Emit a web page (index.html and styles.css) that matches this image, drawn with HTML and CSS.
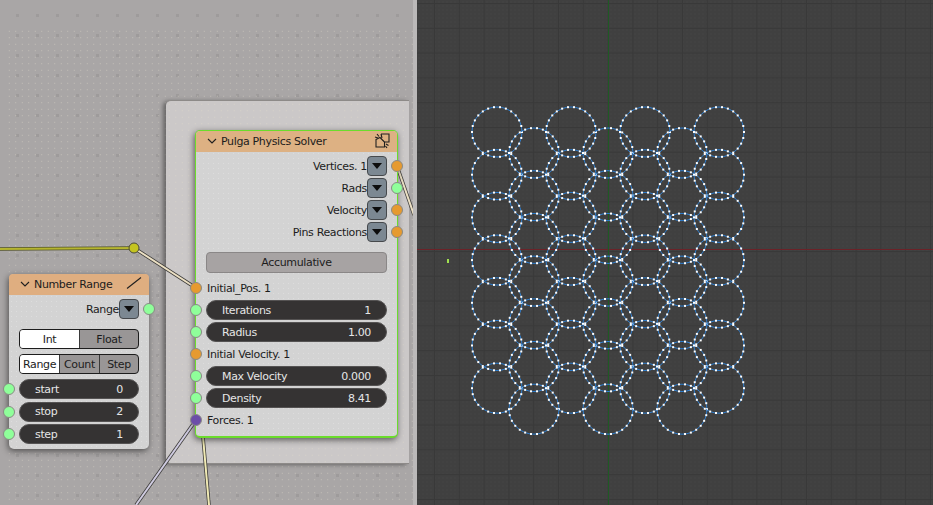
FILE: index.html
```html
<!DOCTYPE html>
<html lang="en">
<head>
    <meta charset="UTF-8">
    <title>Pulga Physics Solver</title>
    <link rel="stylesheet" href="styles.css">
</head>
<body>
    <div class="screen">
        <div class="node-editor">
            <div class="frame"></div>

            <!-- wires sit above the frame but under the nodes -->
            <svg class="wires" width="415" height="505" viewBox="0 0 415 505">
                <path class="wire-edge-olive" d="M0 249 L134 248"/>
                <path class="wire-olive" d="M0 249 L134 248"/>
                <path class="wire-edge" d="M134 248 L196 288"/>
                <path class="wire-pale" d="M134 248 L196 288"/>
                <path class="wire-edge" d="M397 166 L414 215"/>
                <path class="wire-pale" d="M397 166 L414 215"/>
                <path class="wire-edge" d="M196 420 L136 505"/>
                <path class="wire-lilac" d="M196 420 L136 505"/>
                <path class="wire-edge" d="M203 437 L209 505"/>
                <path class="wire-cream" d="M203 437 L209 505"/>
                <circle class="reroute" cx="134" cy="248" r="5"/>
            </svg>

            <section class="node node-solver">
                <header class="node-head">
                    <svg class="chevron" width="10" height="6" viewBox="0 0 10 6"><path d="M1 1 L5 5 L9 1"/></svg>
                    <span class="node-title">Pulga Physics Solver</span>
                    <svg class="head-icon" width="16" height="16" viewBox="0 0 16 16">
                        <path d="M7 1 H15 V9 H10.5 M7 1 L8 5 M2 6.5 L6 4.5 L10.5 9 V14 H2 Z M3 1 L5 3.5 M1 4 L4 5 M12 11 L14.5 12.5 M11.5 13 L13 15"/>
                    </svg>
                </header>
                <div class="node-body">
                    <div class="row row-out"><span>Vertices. 1</span><span class="drop"><i></i></span><b class="socket socket-right orange"></b></div>
                    <div class="row row-out"><span>Rads</span><span class="drop"><i></i></span><b class="socket socket-right green"></b></div>
                    <div class="row row-out"><span>Velocity</span><span class="drop"><i></i></span><b class="socket socket-right orange"></b></div>
                    <div class="row row-out"><span>Pins Reactions</span><span class="drop"><i></i></span><b class="socket socket-right orange"></b></div>
                    <div class="row row-button"><span class="wide-button">Accumulative</span></div>
                    <div class="row"><span class="row-label">Initial_Pos. 1</span><b class="socket socket-left orange"></b></div>
                    <div class="row"><span class="field"><span>Iterations</span><span>1</span></span><b class="socket socket-left green"></b></div>
                    <div class="row"><span class="field"><span>Radius</span><span>1.00</span></span><b class="socket socket-left green"></b></div>
                    <div class="row"><span class="row-label">Initial Velocity. 1</span><b class="socket socket-left orange"></b></div>
                    <div class="row"><span class="field"><span>Max Velocity</span><span>0.000</span></span><b class="socket socket-left green"></b></div>
                    <div class="row"><span class="field"><span>Density</span><span>8.41</span></span><b class="socket socket-left green"></b></div>
                    <div class="row"><span class="row-label">Forces. 1</span><b class="socket socket-left purple"></b></div>
                </div>
            </section>

            <section class="node node-range">
                <header class="node-head">
                    <svg class="chevron" width="10" height="6" viewBox="0 0 10 6"><path d="M1 1 L5 5 L9 1"/></svg>
                    <span class="node-title">Number Range</span>
                    <svg class="head-icon" width="16" height="16" viewBox="0 0 16 16"><path d="M1 12.5 L15 1.5"/></svg>
                </header>
                <div class="node-body">
                    <div class="row row-out"><span>Range</span><span class="drop"><i></i></span><b class="socket socket-right green"></b></div>
                    <div class="toggle toggle-first">
                        <span class="on">Int</span>
                        <span>Float</span>
                    </div>
                    <div class="toggle toggle-three">
                        <span class="on">Range</span>
                        <span>Count</span>
                        <span>Step</span>
                    </div>
                    <div class="row"><span class="field"><span>start</span><span>0</span></span><b class="socket socket-left green"></b></div>
                    <div class="row"><span class="field"><span>stop</span><span>2</span></span><b class="socket socket-left green"></b></div>
                    <div class="row"><span class="field"><span>step</span><span>1</span></span><b class="socket socket-left green"></b></div>
                </div>
            </section>
        </div>

        <div class="divider"></div>

        <div class="viewport">
            <div class="axis-x"></div>
            <div class="axis-y"></div>
            <i class="origin-mark"></i>
            <svg id="circles" class="circles" width="516" height="505" viewBox="417 0 516 505"></svg>
        </div>
    </div>
    <script src="script.js"></script>
</body>
</html>
```

FILE: styles.css
```css
* {
    box-sizing: border-box;
}
body {
    margin: 0;
    overflow: hidden;
    font-family: "DejaVu Sans", sans-serif;
    font-size: 11px;
    letter-spacing: -0.35px;
    color: #1c1c1c;
    background: #a8a5a5;
}
.screen {
    display: flex;
    width: 933px;
    height: 505px;
}

/* node editor */
.node-editor {
    position: relative;
    width: 413px;
    height: 505px;
    overflow: hidden;
    background-color: #a9a6a6;
    background-image: radial-gradient(circle at 17.5px 15.5px, #9e9b9b 1.6px, transparent 2px);
    background-size: 20px 20px;
}
.node-editor::before {
    content: "";
    position: absolute;
    left: 6px;
    right: 0;
    top: 28px;
    bottom: 0;
    background-image: radial-gradient(circle, #c8c4ba 0.55px, transparent 0.9px);
    background-size: 6.5px 6.5px;
}
.frame {
    position: absolute;
    left: 166px;
    top: 100px;
    width: 243px;
    height: 364px;
    border-radius: 5px 0 0 5px;
    background-color: #cbc8c8;
    background-image: radial-gradient(circle, #d9d4ca 0.5px, transparent 0.9px);
    background-size: 6.5px 6.5px;
    border-top: 1px solid #8d8a88;
    border-bottom: 1px solid #8d8a88;
    box-shadow: -3px 1px 4px rgba(40, 40, 40, 0.5);
}
.wires {
    position: absolute;
    left: 0;
    top: 0;
}
.wires path {
    fill: none;
    stroke-width: 2px;
}
.wires .wire-edge {
    stroke: #3b3a38;
    stroke-width: 3.5px;
}
.wires .wire-edge-olive {
    stroke: #55552a;
    stroke-width: 3.5px;
}
.wires .wire-olive {
    stroke: #b5b530;
}
.wires .wire-pale {
    stroke: #ece0c4;
}
.wires .wire-lilac {
    stroke: #cfcbe0;
}
.wires .wire-cream {
    stroke: #f0e9b4;
}
.reroute {
    fill: #c4c420;
    stroke: #4a4a3a;
    stroke-width: 1px;
}

/* nodes */
.node {
    position: absolute;
    background-color: #d3d3d3;
    background-image: radial-gradient(circle, #dddddd 0.5px, transparent 0.9px);
    background-size: 5px 5px;
    border-radius: 5px;
    box-shadow: -1px 2px 6px rgba(30, 30, 30, 0.65);
}
.node-solver {
    left: 195px;
    top: 130px;
    width: 203px;
    height: 308px;
    border: 2px solid #6bdc2c;
    border-width: 1px 1px 2px 1px;
}
.node-range {
    left: 9px;
    top: 274px;
    width: 140px;
    height: 175px;
}
.node-head {
    display: flex;
    align-items: center;
    height: 21px;
    padding: 0 7px 1px 11px;
    background-color: #ddb183;
    border-radius: 4px 4px 0 0;
}
.node-range .node-head {
    background-color: #dfae80;
}
.chevron {
    flex: none;
    margin-right: 4px;
}
.chevron path,
.head-icon path {
    fill: none;
    stroke: #1f1f1f;
    stroke-width: 1.1px;
}
.node-title {
    flex: 1;
    white-space: nowrap;
}
.node-body {
    display: flex;
    flex-direction: column;
    padding: 3px 10px 0;
}
.row {
    position: relative;
    display: flex;
    align-items: center;
    height: 22px;
}
.row-out {
    justify-content: flex-end;
}
.row-button {
    margin: 8px 0 4px;
}
.row-label {
    padding-left: 1px;
}
.drop {
    display: flex;
    align-items: center;
    justify-content: center;
    width: 20px;
    height: 20px;
    background-color: #7c8892;
    border: 1px solid #46494c;
    border-radius: 4px;
}
.drop i {
    width: 0;
    height: 0;
    border-left: 5px solid transparent;
    border-right: 5px solid transparent;
    border-top: 6px solid #0d0d0d;
}
.wide-button {
    display: flex;
    align-items: center;
    justify-content: center;
    width: 100%;
    height: 21px;
    background-color: #a7a3a3;
    border: 1px solid #8a8787;
    border-radius: 4px;
}
.field {
    display: flex;
    justify-content: space-between;
    align-items: center;
    width: 100%;
    height: 20px;
    padding: 0 15px;
    color: #e6e6e6;
    background-color: #353333;
    border: 1px solid #555353;
    border-radius: 10px;
}
.socket {
    position: absolute;
    top: 50%;
    width: 12px;
    height: 12px;
    margin-top: -6px;
    border-radius: 50%;
    border: 1px solid #8a8a85;
}
.socket-left {
    left: -16px;
}
.socket-right {
    right: -16px;
}
.orange {
    background-color: #e69a30;
}
.green {
    background-color: #8fff9a;
}
.purple {
    background-color: #6c4ea8;
}

/* enum toggles */
.toggle {
    display: grid;
    height: 20px;
    overflow: hidden;
    background-color: #999696;
    border: 1px solid #1d1d1d;
    border-radius: 4px;
}
.toggle-first {
    grid-template-columns: 59px 1fr;
    margin-top: 9px;
    margin-bottom: 5px;
}
.toggle-three {
    grid-template-columns: 39px 40px 1fr;
    margin-bottom: 4px;
}
.toggle span {
    display: flex;
    align-items: center;
    justify-content: center;
    border-left: 1px solid #3a3a3a;
}
.toggle span:first-child {
    border-left: 0;
}
.toggle .on {
    background-color: #ffffff;
}
.node-range .toggle ~ .row {
    height: 22.5px;
}

/* divider between the two editors */
.divider {
    flex: none;
    width: 4px;
    background-color: #bbb9b9;
}

/* 3d viewport */
.viewport {
    position: relative;
    flex: 1;
    overflow: hidden;
    background-color: #404040;
    background-image:
        linear-gradient(90deg, #393939 1px, transparent 1px),
        linear-gradient(#393939 1px, transparent 1px),
        radial-gradient(circle, #474747 0.5px, transparent 0.8px);
    background-size: 24.8px 24.8px, 24.8px 24.8px, 4px 4px;
    background-position: 17px 3px, 0 3px, 0 0;
}
.axis-x {
    position: absolute;
    left: 0;
    right: 0;
    top: 249px;
    height: 1px;
    background-color: #6c2228;
}
.axis-y {
    position: absolute;
    top: 0;
    bottom: 0;
    left: 191px;
    width: 1px;
    background-color: #1f5a24;
}
.origin-mark {
    position: absolute;
    left: 30px;
    top: 259px;
    width: 2px;
    height: 4px;
    background-color: #a0e050;
}
.circles {
    position: absolute;
    left: 0;
    top: 0;
}
.circles .edge {
    fill: none;
    stroke: #2f7fd0;
    stroke-width: 1px;
}
.circles .vert {
    fill: #ffffff;
}
```

FILE: script.js
```js
// pulga particles: seven columns of circles, every other column shifted down
const svgNS = 'http://www.w3.org/2000/svg';
const host = document.getElementById('circles');
const radius = 25;
const verts = 26;
const dotSize = 2;

function addCircle(cx, cy) {
    const ring = document.createElementNS(svgNS, 'circle');
    ring.setAttribute('class', 'edge');
    ring.setAttribute('cx', cx);
    ring.setAttribute('cy', cy);
    ring.setAttribute('r', radius);
    host.appendChild(ring);
    for (let i = 0; i < verts; i++) {
        const a = (i / verts) * Math.PI * 2;
        const dot = document.createElementNS(svgNS, 'rect');
        dot.setAttribute('class', 'vert');
        dot.setAttribute('x', cx + Math.cos(a) * radius - dotSize / 2);
        dot.setAttribute('y', cy + Math.sin(a) * radius - dotSize / 2);
        dot.setAttribute('width', dotSize);
        dot.setAttribute('height', dotSize);
        host.appendChild(dot);
    }
}

for (let col = 0; col < 7; col++) {
    const cx = 497 + col * 37;
    const top = col % 2 === 0 ? 132 : 153;
    for (let row = 0; row < 7; row++) {
        addCircle(cx, top + row * 42.7);
    }
}
```
